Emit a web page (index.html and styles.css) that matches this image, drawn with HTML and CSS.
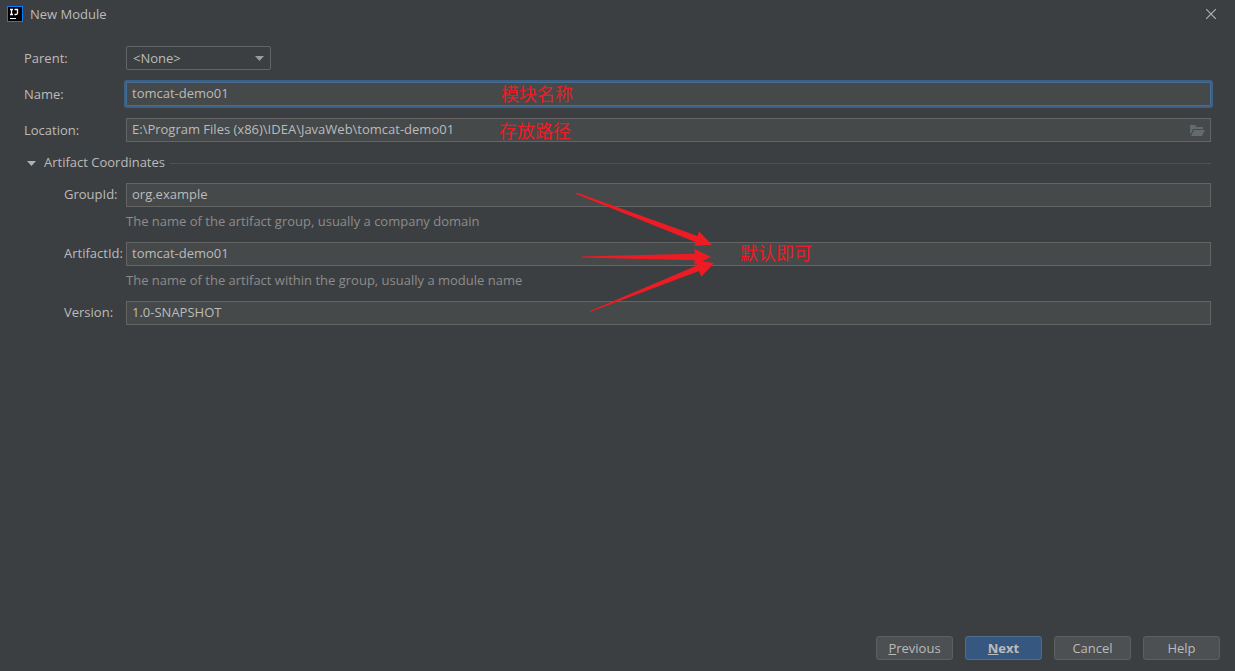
FILE: index.html
```
<!DOCTYPE html>
<html lang="en">
<head>
    <meta charset="UTF-8">
    <meta name="viewport" content="width=device-width, initial-scale=1.0">
    <title>New Module</title>
    <link rel="stylesheet" href="styles.css">
</head>
<body>
    <header class="title-bar">
        <svg class="logo" width="16" height="16" viewBox="0 0 16 16" aria-hidden="true">
            <rect width="16" height="16" fill="#087cfa"/>
            <rect x="1" y="1" width="14" height="14" fill="#000"/>
            <path d="M3 3.500h3M4.500 3.500v5M3 8.500h3M7.500 3.500h3v3.500q0 1.500-1.500 1.500h-1.500" fill="none" stroke="#fff" stroke-width="1.300"/>
            <path d="M3 12h6v1H3z" fill="#fff"/>
        </svg>
        <h1>New Module</h1>
        <button type="button" class="close" aria-label="Close">
            <svg width="10" height="10" viewBox="0 0 10 10"><path d="M0 0l10 10M10 0L0 10" stroke="#afb1b3" stroke-width="1.200"/></svg>
        </button>
    </header>
    <form class="module-form" id="module-form">
        <div class="row">
            <label for="parent">Parent:</label>
            <div class="select-box">
                <select name="parent" id="parent">
                    <option value="none">&lt;None&gt;</option>
                </select>
                <svg class="arrow" width="9" height="5" viewBox="0 0 9 5" aria-hidden="true"><path d="M0 0h9L4.500 5z" fill="#9a9da0"/></svg>
            </div>
        </div>
        <div class="row">
            <label for="name">Name:</label>
            <input type="text" class="text-box active" name="name" id="name" value="tomcat-demo01">
        </div>
        <div class="row">
            <label for="location">Location:</label>
            <div class="browse-box">
                <input type="text" class="text-box" name="location" id="location" value="E:\Program Files (x86)\IDEA\JavaWeb\tomcat-demo01">
                <button type="button" class="browse" aria-label="Browse">
                    <svg width="15" height="11" viewBox="0 0 15 11"><path d="M0 0h5l1.500 2H13v2H3L1 8.500H0zM4 5h11L12 11H1z" fill="#646b6f"/></svg>
                </button>
            </div>
        </div>
        <fieldset>
            <legend class="hidden">Artifact Coordinates</legend>
            <button type="button" class="section">
                <svg width="9" height="5" viewBox="0 0 9 5" aria-hidden="true"><path d="M0 0h9L4.500 5z" fill="#afb1b3"/></svg>
                <span>Artifact Coordinates</span>
            </button>
            <div class="row nested">
                <label for="group">GroupId:</label>
                <input type="text" class="text-box" name="group" id="group" value="org.example">
            </div>
            <p class="hint">The name of the artifact group, usually a company domain</p>
            <div class="row nested">
                <label for="artifact">ArtifactId:</label>
                <input type="text" class="text-box" name="artifact" id="artifact" value="tomcat-demo01">
            </div>
            <p class="hint">The name of the artifact within the group, usually a module name</p>
            <div class="row nested">
                <label for="version">Version:</label>
                <input type="text" class="text-box" name="version" id="version" value="1.0-SNAPSHOT">
            </div>
        </fieldset>
    </form>
    <footer class="buttons">
        <button type="button"><u>P</u>revious</button>
        <button type="submit" form="module-form" class="primary"><u>N</u>ext</button>
        <button type="button">Cancel</button>
        <button type="button">Help</button>
    </footer>

    <!-- notes drawn over the form -->
    <div class="notes">
        <span class="note note-name">模块名称</span>
        <span class="note note-location">存放路径</span>
        <span class="note note-default">默认即可</span>
        <svg class="note-arrows" width="140" height="124" viewBox="0 0 140 124" aria-hidden="true">
            <g fill="#ed1c24">
                <path d="M0 0L2 0L121.500 43L123 38.300L136 51.700L118 53L120 49.300L0 1z"/>
                <path d="M5.500 64.500L5.500 63.500L119 60.700L118 55.700L135 64L118 72L119 67.300z"/>
                <path d="M14 119L14 118L121 72.500L118.500 67L138 70L125.300 83.700L123 78z"/>
            </g>
        </svg>
    </div>
</body>
</html>
```
FILE: styles.css
```
* {
    margin: 0;
    padding: 0;
    box-sizing: border-box;
}

body {
    display: flex;
    flex-direction: column;
    min-height: 100vh;
    position: relative;
    background: #3c3f41;
    color: #bbbbbb;
    font-family: "Open Sans", "Noto Sans CJK SC", sans-serif;
    font-size: 13px;
    line-height: 18px;
}

button, input, select {
    font: inherit;
    color: inherit;
}

.title-bar {
    display: flex;
    align-items: center;
    gap: 7px;
    height: 28px;
    padding: 0 19px 0 7px;
}

h1 {
    flex: 1;
    font-size: 13px;
    font-weight: normal;
}

.close {
    display: flex;
    padding: 0;
    background: none;
    border: none;
}

.module-form {
    flex: 1;
    padding: 18px 24px;
}

.row {
    display: flex;
    align-items: center;
    margin-bottom: 12px;
}

.row label {
    width: 102px;
}

.nested {
    margin-bottom: 0;
}

.nested label {
    width: 62px;
    padding-bottom: 2px;
}

.select-box, .browse-box {
    display: flex;
    align-items: center;
    position: relative;
}

.select-box {
    width: 145px;
}

.browse-box {
    flex: 1;
}

select {
    width: 100%;
    height: 24px;
    padding: 0 6px;
    appearance: none;
    background: #3c3f41;
    border: 1px solid #646464;
    border-radius: 2px;
}

.arrow {
    position: absolute;
    right: 7px;
    pointer-events: none;
}

.text-box {
    flex: 1;
    min-width: 0;
    height: 24px;
    padding: 0 5px 3px;
    background: #45494a;
    border: 1px solid #646464;
    outline: none;
}

.active {
    border-color: #466d94;
    box-shadow: 0 0 0 2px #3d6185;
    border-radius: 1px;
}

.browse {
    display: flex;
    position: absolute;
    right: 6px;
    background: none;
    border: none;
}

fieldset {
    border: none;
    padding-left: 40px;
}

.hidden {
    display: none;
}

.section {
    display: flex;
    align-items: center;
    gap: 8px;
    width: calc(100% + 37px);
    margin: -1px 0 10px -37px;
    background: none;
    border: none;
}

.section span {
    padding-bottom: 2px;
}

.section::after {
    content: "";
    flex: 1;
    height: 1px;
    margin-left: -3px;
    background: #515151;
}

.hint {
    height: 35px;
    padding: 5px 0 0 62px;
    color: #8c8c8c;
}

.buttons {
    display: flex;
    justify-content: flex-end;
    gap: 12px;
    padding: 0 15px 11px;
}

.buttons button {
    width: 77px;
    height: 24px;
    background: #4c5052;
    border: 1px solid #5e6060;
    border-radius: 3px;
}

.buttons .primary {
    background: #365880;
    border-color: #4c708c;
    font-weight: bold;
}

.notes {
    position: absolute;
    inset: 0;
    pointer-events: none;
}

.note {
    position: absolute;
    color: #ed1c24;
    font-family: "Noto Sans CJK SC", sans-serif;
    font-size: 18px;
    line-height: 24px;
}

.note-name {
    left: 501px;
    top: 81px;
}

.note-location {
    left: 499px;
    top: 118px;
}

.note-default {
    left: 740px;
    top: 240px;
}

.note-arrows {
    position: absolute;
    left: 576px;
    top: 193px;
}
```
